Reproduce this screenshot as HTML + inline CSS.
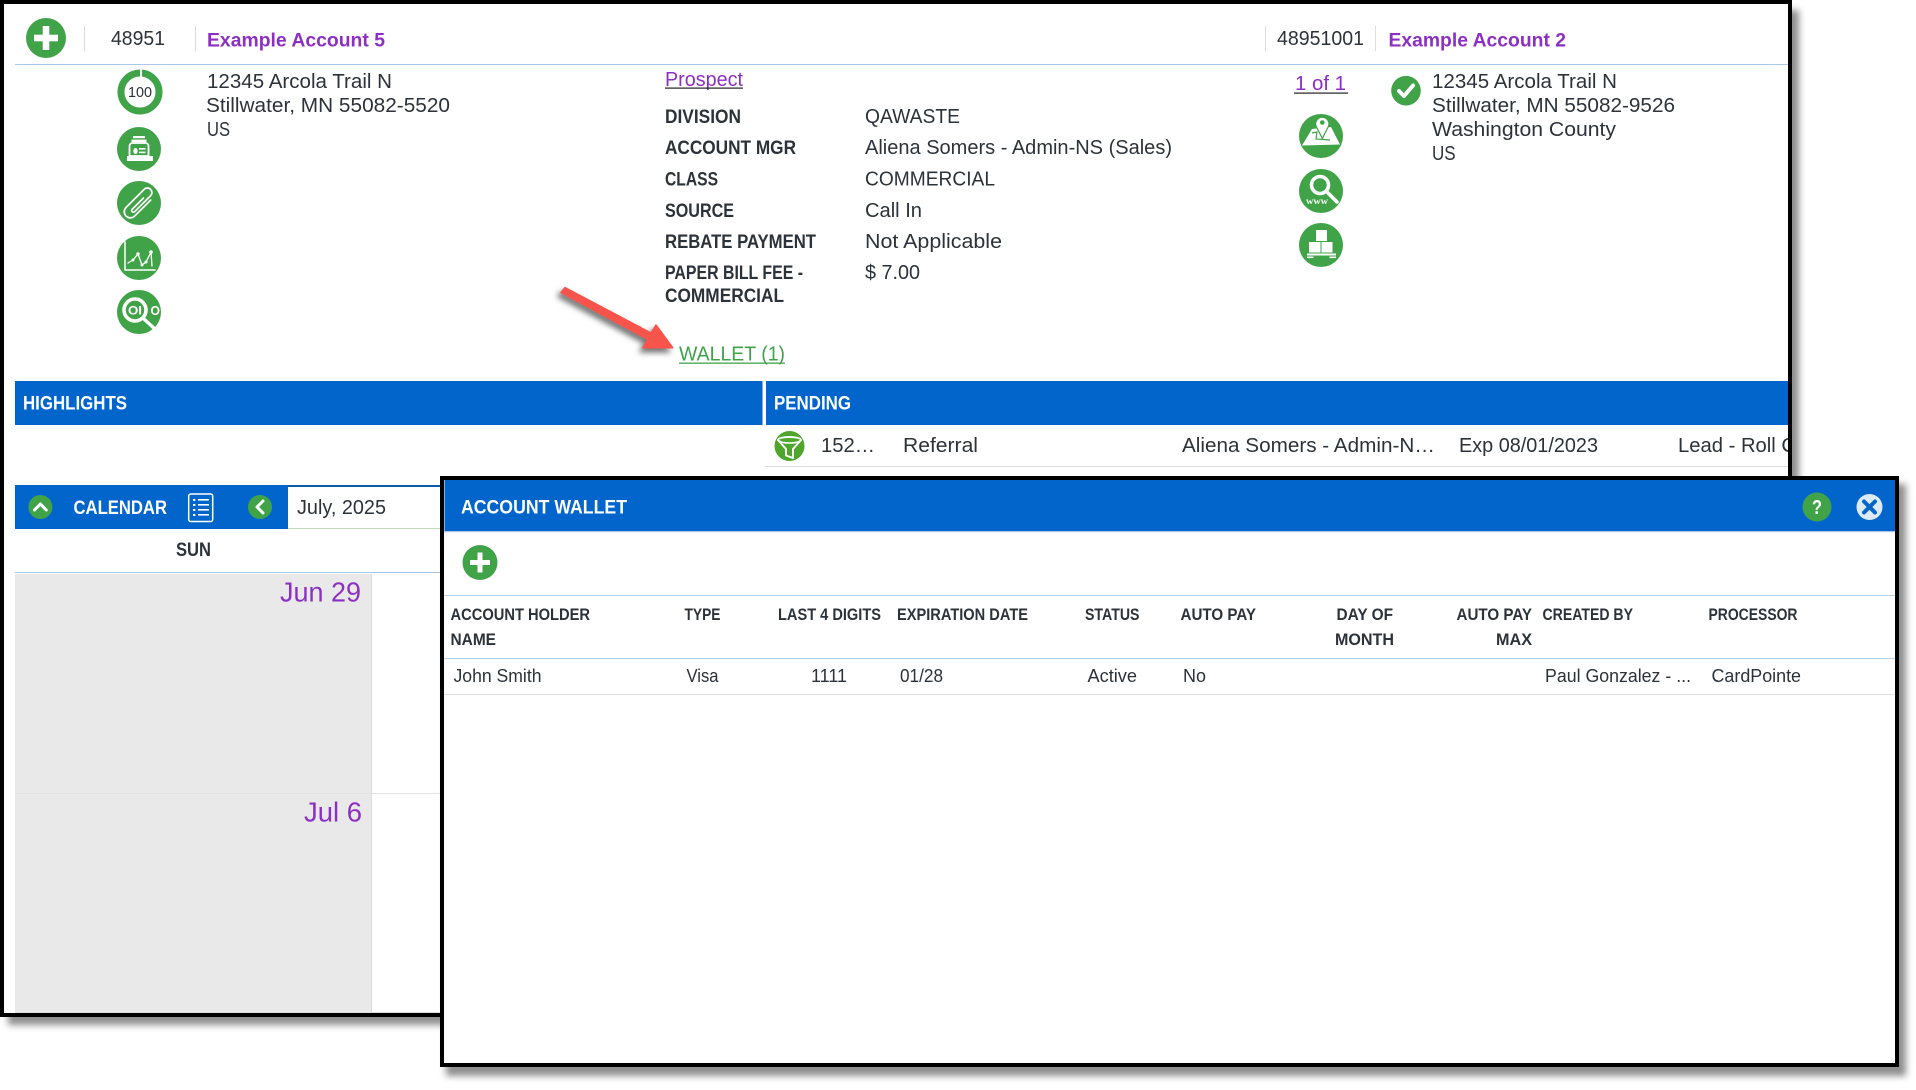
<!DOCTYPE html>
<html lang="en"><head><meta charset="utf-8"><title>Account Wallet</title>
<style>
html,body{margin:0;padding:0;background:#fff;width:1916px;height:1090px;overflow:hidden}
svg{display:block;position:absolute;left:0;top:0;filter:blur(.35px)}
text{font-family:"Liberation Sans",Arial,sans-serif;fill:#2c3239}
.r{font-size:20px}
.t{font-size:18.5px}
.b{font-size:19.5px;font-weight:bold}
.h{font-size:17px;font-weight:bold}
.w{fill:#fff}
.p{fill:#8c30c4}
.ic{fill:#41a348}
.s{fill:none;stroke:#fff;stroke-linecap:round;stroke-linejoin:round}
</style></head><body>
<svg width="1916" height="1090" viewBox="0 0 1916 1090" xmlns="http://www.w3.org/2000/svg">
<defs>
<filter id="sh" x="-5%" y="-5%" width="110%" height="110%"><feGaussianBlur stdDeviation="3.5"/></filter>
<filter id="ash" x="-30%" y="-30%" width="160%" height="160%"><feGaussianBlur stdDeviation="3"/></filter>
<clipPath id="cp"><rect x="766" y="426" width="1022" height="50"/></clipPath>
</defs>

<!-- main window -->
<rect x="8" y="10" width="1791" height="1015" fill="#8f8f8f" filter="url(#sh)"/>
<rect x="2" y="2" width="1788" height="1013" fill="#fff" stroke="#000" stroke-width="4"/>

<!-- top header -->
<circle cx="46" cy="38" r="20" class="ic"/>
<rect x="34" y="34.7" width="24" height="6.6" fill="#fff"/><rect x="42.7" y="26" width="6.6" height="24" fill="#fff"/>
<rect x="84" y="26" width="1" height="25" fill="#ddd"/>
<text x="111" y="45" class="r" textLength="54" lengthAdjust="spacingAndGlyphs">48951</text>
<rect x="195" y="26" width="1" height="25" fill="#ddd"/>
<text x="207" y="46.5" class="b p" textLength="178" lengthAdjust="spacingAndGlyphs">Example Account 5</text>
<rect x="1265" y="26" width="1" height="25" fill="#ddd"/>
<text x="1277" y="45" class="r" textLength="87" lengthAdjust="spacingAndGlyphs">48951001</text>
<rect x="1375" y="26" width="1" height="25" fill="#ddd"/>
<text x="1388.5" y="46.5" class="b p" textLength="177.5" lengthAdjust="spacingAndGlyphs">Example Account 2</text>
<rect x="15" y="64" width="1773" height="1" fill="#a9c8ea"/>

<!-- left address -->
<text x="207" y="88" class="r" textLength="185" lengthAdjust="spacingAndGlyphs">12345 Arcola Trail N</text>
<text x="206" y="112" class="r" textLength="244" lengthAdjust="spacingAndGlyphs">Stillwater, MN 55082-5520</text>
<text transform="translate(207 136) scale(.83 1)" class="r">US</text>

<!-- left icons -->
<circle cx="140" cy="92" r="19" fill="#fff" stroke="#41a348" stroke-width="7"/>
<rect x="140" y="68" width="2" height="10" fill="#fff"/>
<text x="128" y="97" style="font-size:15px" fill="#111" textLength="24" lengthAdjust="spacingAndGlyphs">100</text>

<circle cx="139" cy="149" r="22" class="ic"/>
<rect x="133" y="136" width="12" height="2.2" fill="#fff"/>
<rect x="131.5" y="139.6" width="15" height="2.6" fill="#fff"/>
<path d="M129.5 156V146a3 3 0 0 1 3-3h13a3 3 0 0 1 3 3v10z" fill="none" stroke="#fff" stroke-width="1.8"/>
<rect x="127" y="156" width="26" height="5" fill="#fff"/>
<ellipse cx="135.5" cy="151" rx="2.2" ry="3" fill="#fff"/>
<rect x="139" y="148" width="6.5" height="1.6" fill="#fff"/><rect x="139" y="151.6" width="6.5" height="1.6" fill="#fff"/>

<circle cx="139" cy="203" r="22" class="ic"/>
<g transform="translate(139 204) rotate(45) scale(1.22)">
<path class="s" stroke-width="1.4" d="M4.5-9V9.5a5 5 0 0 1-10 0V-11.5a3.7 3.7 0 0 1 7.4 0V7a1.4 1.4 0 0 1-2.8 0V-6"/>
</g>

<circle cx="139" cy="258" r="22" class="ic"/>
<path class="s" stroke-width="1.5" d="M125 242V270H155"/>
<path class="s" stroke-width="1.3" d="M128 263L133 260L138 254L142 265L146 262L151 252L152 266"/>
<g fill="#fff"><circle cx="133" cy="260" r="1.5"/><circle cx="138" cy="254" r="1.7"/><circle cx="142" cy="265" r="1.5"/><circle cx="146" cy="262" r="1.5"/><circle cx="151" cy="252" r="1.8"/></g>

<circle cx="139" cy="312" r="22" class="ic"/>
<circle cx="135" cy="310" r="11" fill="none" stroke="#fff" stroke-width="3.6"/>
<path d="M144 319L156 330" stroke="#fff" stroke-width="3.4" stroke-linecap="round"/>
<text x="128" y="314.5" class="w" style="font-size:12px;font-weight:bold" textLength="14" lengthAdjust="spacingAndGlyphs">OI</text>
<text x="150.5" y="315" class="w" style="font-size:12.5px;font-weight:bold" textLength="9.5" lengthAdjust="spacingAndGlyphs">O</text>

<!-- details -->
<text x="665" y="86" class="r p" textLength="78" lengthAdjust="spacingAndGlyphs">Prospect</text>
<rect x="665" y="87.5" width="78" height="1.2" fill="#222"/>
<text x="665" y="123" class="b" textLength="76" lengthAdjust="spacingAndGlyphs">DIVISION</text>
<text x="665" y="154" class="b" textLength="131" lengthAdjust="spacingAndGlyphs">ACCOUNT MGR</text>
<text x="665" y="185.5" class="b" textLength="53" lengthAdjust="spacingAndGlyphs">CLASS</text>
<text x="665" y="217" class="b" textLength="69" lengthAdjust="spacingAndGlyphs">SOURCE</text>
<text x="665" y="248" class="b" textLength="151" lengthAdjust="spacingAndGlyphs">REBATE PAYMENT</text>
<text x="665" y="279" class="b" textLength="138" lengthAdjust="spacingAndGlyphs">PAPER BILL FEE -</text>
<text x="665" y="302" class="b" textLength="119" lengthAdjust="spacingAndGlyphs">COMMERCIAL</text>
<text x="865" y="123" class="r" textLength="95" lengthAdjust="spacingAndGlyphs">QAWASTE</text>
<text x="865" y="154" class="r" textLength="307" lengthAdjust="spacingAndGlyphs">Aliena Somers - Admin-NS (Sales)</text>
<text x="865" y="185.5" class="r" textLength="130" lengthAdjust="spacingAndGlyphs">COMMERCIAL</text>
<text x="865" y="217" class="r" textLength="57" lengthAdjust="spacingAndGlyphs">Call In</text>
<text x="865" y="248" class="r" textLength="137" lengthAdjust="spacingAndGlyphs">Not Applicable</text>
<text x="865" y="279" class="r" textLength="55" lengthAdjust="spacingAndGlyphs">$ 7.00</text>
<text x="679" y="360.5" class="r" style="fill:#3fa34a" textLength="106" lengthAdjust="spacingAndGlyphs">WALLET (1)</text>
<rect x="679" y="362.5" width="106" height="1.3" fill="#3fa34a"/>

<!-- arrow -->
<path d="M565 287.5L651 333L656 325L672.7 347.7L643 347.7L648 339.5L561 292.5Z" fill="#777" stroke="#777" stroke-width="2" stroke-linejoin="round" transform="translate(-3 4)" filter="url(#ash)"/>
<path d="M565 287.5L651 333L656 325L672.7 347.7L643 347.7L648 339.5L561 292.5Z" fill="#f8544c" stroke="#f8544c" stroke-width="1.5" stroke-linejoin="round"/>

<!-- right column -->
<text x="1295" y="90" class="r p" textLength="51" lengthAdjust="spacingAndGlyphs">1 of 1</text>
<rect x="1294" y="92.5" width="54" height="1.2" fill="#222"/>
<circle cx="1406" cy="90.7" r="14.8" class="ic"/>
<path class="s" stroke-width="4" d="M1399 91L1404 96L1413 85.5"/>
<text x="1432" y="88" class="r" textLength="185" lengthAdjust="spacingAndGlyphs">12345 Arcola Trail N</text>
<text x="1432" y="112" class="r" textLength="243" lengthAdjust="spacingAndGlyphs">Stillwater, MN 55082-9526</text>
<text x="1432" y="136" class="r" textLength="184" lengthAdjust="spacingAndGlyphs">Washington County</text>
<text transform="translate(1432 160) scale(.85 1)" class="r">US</text>

<circle cx="1321" cy="136" r="22" class="ic"/>
<path d="M1312 129L1331 127L1340 144.5L1302 145.5Z" fill="#fff"/>
<path d="M1322.3 138.5L1316.5 127a6.6 6.6 0 1 1 11.6 0Z" fill="#fff" stroke="#41a348" stroke-width="1.2"/>
<circle cx="1322.3" cy="122.5" r="2.3" fill="#41a348"/>
<path d="M1312 133L1317 132L1316 139L1330 140" fill="none" stroke="#41a348" stroke-width="1.2"/>

<circle cx="1321" cy="191" r="22" class="ic"/>
<circle cx="1320" cy="185" r="8.5" fill="none" stroke="#fff" stroke-width="3.6"/>
<path d="M1327 192L1337 202" stroke="#fff" stroke-width="3.6" stroke-linecap="round"/>
<text x="1306" y="204" class="w" style="font-family:'Liberation Serif',serif;font-size:9px;font-weight:bold" textLength="22" lengthAdjust="spacingAndGlyphs">www</text>

<circle cx="1321" cy="245" r="22" class="ic"/>
<rect x="1316" y="230" width="11" height="11" fill="#fff"/>
<rect x="1309" y="242" width="11.5" height="10.5" fill="#fff"/><rect x="1321.5" y="242" width="11" height="10.5" fill="#fff"/>
<rect x="1307" y="253.5" width="29" height="2" fill="#fff"/>
<rect x="1307" y="256.5" width="6.5" height="1.6" fill="#fff"/><rect x="1329.5" y="256.5" width="6.5" height="1.6" fill="#fff"/>

<!-- blue bars -->
<rect x="15" y="381" width="747.5" height="44" fill="#0265cc"/>
<rect x="766" y="381" width="1022" height="44" fill="#0265cc"/>
<text x="23" y="409.5" class="b w" textLength="104" lengthAdjust="spacingAndGlyphs">HIGHLIGHTS</text>
<text x="774" y="409.5" class="b w" textLength="77" lengthAdjust="spacingAndGlyphs">PENDING</text>

<!-- pending row -->
<circle cx="789.5" cy="446" r="15" fill="#4fa62c"/>
<path d="M778 440C778 436 801 436 801 440L793 449V458L786 455.5V449Z" fill="none" stroke="#fff" stroke-width="1.9" stroke-linejoin="round"/>
<path d="M778 440C781 444 798 444 801 440" fill="none" stroke="#fff" stroke-width="1.6"/>
<text x="821" y="452" class="r" textLength="54" lengthAdjust="spacingAndGlyphs">152…</text>
<text x="903" y="452" class="r" textLength="75" lengthAdjust="spacingAndGlyphs">Referral</text>
<text x="1182" y="452" class="r" textLength="253" lengthAdjust="spacingAndGlyphs">Aliena Somers - Admin-N…</text>
<text x="1459" y="452" class="r" textLength="139" lengthAdjust="spacingAndGlyphs">Exp 08/01/2023</text>
<g clip-path="url(#cp)"><text x="1678" y="452" class="r" textLength="118" lengthAdjust="spacingAndGlyphs">Lead - Roll C</text></g>
<rect x="765" y="466" width="1023" height="1" fill="#ddd"/>

<!-- calendar -->
<rect x="15" y="485" width="273" height="44" fill="#0265cc"/>
<rect x="288" y="485" width="152" height="2" fill="#0a5ca8"/>
<rect x="288" y="528" width="152" height="1" fill="#c5dcb8"/>
<circle cx="40.4" cy="507" r="12" class="ic"/>
<path class="s" stroke-width="3" d="M34.5 510L40.4 504L46.3 510"/>
<text x="73.5" y="514" class="b w" textLength="93.5" lengthAdjust="spacingAndGlyphs">CALENDAR</text>
<rect x="188.7" y="494" width="24" height="27.5" rx="2" fill="none" stroke="#fff" stroke-width="1.5"/>
<g fill="#fff">
<rect x="193" y="499" width="2.4" height="2"/><rect x="198" y="499" width="11" height="1.6"/>
<rect x="193" y="504" width="2.4" height="2"/><rect x="198" y="504" width="11" height="1.6"/>
<rect x="193" y="509" width="2.4" height="2"/><rect x="198" y="509" width="11" height="1.6"/>
<rect x="193" y="514" width="2.4" height="2"/><rect x="198" y="514" width="11" height="1.6"/>
</g>
<circle cx="260" cy="507" r="12" class="ic"/>
<path class="s" stroke-width="3" d="M263 501L257 507L263 513"/>
<text x="297" y="514" class="r" textLength="89" lengthAdjust="spacingAndGlyphs">July, 2025</text>
<text x="176" y="556" class="b" textLength="35" lengthAdjust="spacingAndGlyphs">SUN</text>
<rect x="15" y="572" width="425" height="1" fill="#a9c8ea"/>
<rect x="15" y="574" width="356.5" height="438" fill="#e9e9e9"/>
<rect x="371" y="574" width="1" height="438" fill="#ddd"/>
<rect x="15" y="793" width="356" height="1" fill="#e2e2e2"/>
<rect x="372" y="793" width="68" height="1" fill="#e4e4e4"/>
<rect x="15" y="1012" width="425" height="1" fill="#ddd"/>
<text x="280" y="601.7" class="p" style="font-size:28px" textLength="81" lengthAdjust="spacingAndGlyphs">Jun 29</text>
<text x="304" y="821.3" class="p" style="font-size:28px" textLength="58" lengthAdjust="spacingAndGlyphs">Jul 6</text>

<!-- popup -->
<rect x="446" y="484" width="1460" height="592" fill="#8f8f8f" filter="url(#sh)"/>
<rect x="442" y="478" width="1455" height="587" fill="#fff" stroke="#000" stroke-width="4"/>
<rect x="444.5" y="480" width="1450.5" height="51" fill="#0265cc"/>
<rect x="444" y="531" width="1451" height="1.2" fill="#a9c8ea"/>
<text x="461" y="513.5" class="b w" textLength="166" lengthAdjust="spacingAndGlyphs">ACCOUNT WALLET</text>
<circle cx="1817" cy="507" r="14.5" class="ic"/>
<text x="1812" y="514" class="w" style="font-size:20px;font-weight:bold" textLength="10" lengthAdjust="spacingAndGlyphs">?</text>
<circle cx="1869.5" cy="507" r="13" fill="#dbe9f8"/>
<path d="M1864 501.5L1875 512.5M1875 501.5L1864 512.5" stroke="#0265cc" stroke-width="4" stroke-linecap="round"/>
<circle cx="480" cy="562.5" r="17.5" class="ic"/>
<rect x="470" y="560" width="20" height="5" fill="#fff"/><rect x="477.5" y="552.5" width="5" height="20" fill="#fff"/>
<rect x="444" y="595" width="1451" height="1" fill="#b5d1ee"/>

<text x="450.5" y="620" class="h" textLength="139.5" lengthAdjust="spacingAndGlyphs">ACCOUNT HOLDER</text>
<text x="450.5" y="645" class="h" textLength="45.5" lengthAdjust="spacingAndGlyphs">NAME</text>
<text x="684.5" y="620" class="h" textLength="36" lengthAdjust="spacingAndGlyphs">TYPE</text>
<text x="778" y="620" class="h" textLength="103" lengthAdjust="spacingAndGlyphs">LAST 4 DIGITS</text>
<text x="897" y="620" class="h" textLength="131" lengthAdjust="spacingAndGlyphs">EXPIRATION DATE</text>
<text x="1085" y="620" class="h" textLength="54.5" lengthAdjust="spacingAndGlyphs">STATUS</text>
<text x="1180.5" y="620" class="h" textLength="75.5" lengthAdjust="spacingAndGlyphs">AUTO PAY</text>
<text x="1336.5" y="620" class="h" textLength="56.5" lengthAdjust="spacingAndGlyphs">DAY OF</text>
<text x="1335" y="645" class="h" textLength="59" lengthAdjust="spacingAndGlyphs">MONTH</text>
<text x="1456.5" y="620" class="h" textLength="75.5" lengthAdjust="spacingAndGlyphs">AUTO PAY</text>
<text x="1496" y="645" class="h" textLength="36" lengthAdjust="spacingAndGlyphs">MAX</text>
<text x="1542.5" y="620" class="h" textLength="90.5" lengthAdjust="spacingAndGlyphs">CREATED BY</text>
<text x="1708.5" y="620" class="h" textLength="89" lengthAdjust="spacingAndGlyphs">PROCESSOR</text>
<rect x="444" y="658" width="1451" height="1" fill="#b5d1ee"/>

<text x="453.5" y="682" class="t" textLength="88" lengthAdjust="spacingAndGlyphs">John Smith</text>
<text x="686.5" y="682" class="t" textLength="32" lengthAdjust="spacingAndGlyphs">Visa</text>
<text x="811" y="682" class="t" textLength="36" lengthAdjust="spacingAndGlyphs">1111</text>
<text x="900" y="682" class="t" textLength="43" lengthAdjust="spacingAndGlyphs">01/28</text>
<text x="1087.5" y="682" class="t" textLength="49.5" lengthAdjust="spacingAndGlyphs">Active</text>
<text x="1183" y="682" class="t" textLength="23" lengthAdjust="spacingAndGlyphs">No</text>
<text x="1545" y="682" class="t" textLength="146" lengthAdjust="spacingAndGlyphs">Paul Gonzalez - ...</text>
<text x="1711.5" y="682" class="t" textLength="89.5" lengthAdjust="spacingAndGlyphs">CardPointe</text>
<rect x="444" y="694" width="1451" height="1" fill="#ddd"/>
</svg>
</body></html>
